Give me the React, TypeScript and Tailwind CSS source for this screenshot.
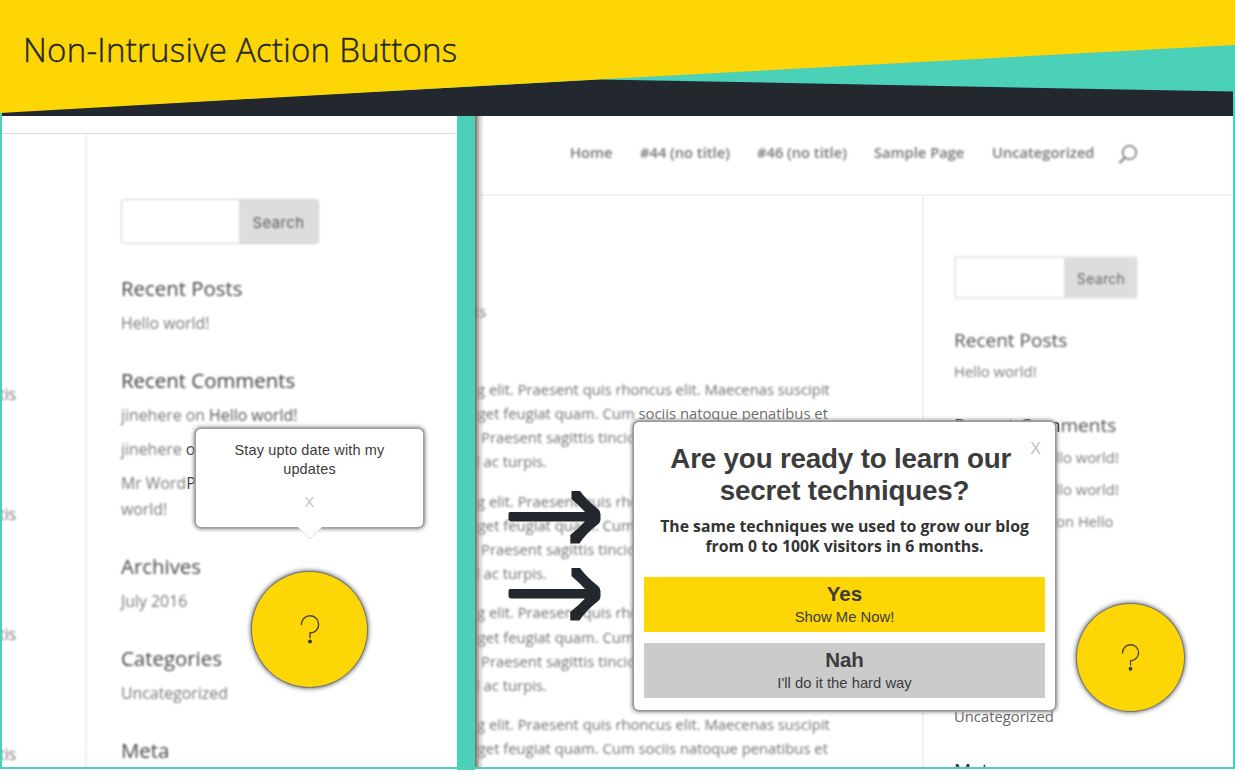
import React from "react";

const blur = "blur-[0.9px]";
const soft = "blur-[0.8px]";

function Banner() {
  return (
    <header className="relative h-[116px] w-full shrink-0">
      <svg className="absolute inset-0" width="1235" height="116" viewBox="0 0 1235 116">
        <rect width="1235" height="116" fill="#4bd1b8" />
        <path d="M2 112 L600 79.5 L1233 91.5 V116 H2 Z" fill="#23272e" />
        <path d="M0 0 H1235 V45 L605 79 L0 113 Z" fill="#fed605" />
      </svg>
      <h1 className="relative pl-[23px] pt-[27px] font-['Open_Sans','Noto_Sans',sans-serif] text-[33px] font-light leading-[46px] tracking-[0.27px] whitespace-nowrap text-[#23272e] [-webkit-text-stroke:0.4px_#23272e]">
        Non-Intrusive Action Buttons
      </h1>
    </header>
  );
}

function QuestionMark({ className }: { className: string }) {
  return (
    <svg className={className} viewBox="0 0 20 30" fill="none" stroke="#4a4a4a">
      <path d="M1.2 10.5 A8.9 8.9 0 1 1 10 18.6 V24" strokeWidth="1.5" />
      <circle cx="10" cy="27.5" r="2.1" fill="#3a3f4c" stroke="none" />
    </svg>
  );
}

function Arrow() {
  return (
    <svg width="93" height="54" viewBox="0 0 93 54" fill="#23272e">
      <path d="M1.500 22 H77 Q71 15.500 63.500 9 V1 H72 Q78 9.500 90 19 Q92.500 21 92.500 24 V30 Q92 33.500 89 35 Q78 43.500 71.500 53.500 H62.300 V45 Q71 38 77 31.500 H2.500 L0.500 30 V23.500 Z" />
    </svg>
  );
}

function LeftPanel() {
  return (
    <section className="flex h-[651px] w-[455px] shrink-0 flex-col overflow-hidden bg-white font-['Open_Sans',sans-serif]">
      <div className="h-[18px] shrink-0 border-b border-[#dedede]" />
      <div className="flex flex-1">
        <div className={`${soft} w-[85px] shrink-0 border-r-2 border-[#ececec] pt-[200px] text-[15.8px] leading-[120px] text-[#747474]`}>
          {[0, 1, 2, 3].map((i) => (
            <div key={i} className="-ml-[3px]">tis</div>
          ))}
        </div>
        <div className="pl-[34px] pt-[65px] whitespace-nowrap text-[15.85px] leading-[26px] text-[#7a7a7a]">
          <div className={`${soft} flex h-[45px] w-[198px] overflow-hidden rounded-[3px] border border-[#d0d0d0]`}>
            <div className="w-[117px]" />
            <div className="flex flex-1 items-center justify-center bg-[#dddddd] pt-[2px] font-['Inter',sans-serif] text-[15px] tracking-[0.4px] text-[#5c5c5c]">Search</div>
          </div>
          <h2 className={`${blur} mt-[29px] text-[20.4px] leading-[30px] text-[#464646]`}>Recent Posts</h2>
          <p className={`${blur} mt-[7px]`}>Hello world!</p>
          <h2 className="mt-[29px] text-[20.4px] leading-[30px] text-[#3c3c3c]">
            <span className={`${blur} inline-block`}>Recent&nbsp;</span>
            <span className={`${soft} inline-block`}>Comments</span>
          </h2>
          <p className="mt-[7px]">
            <span className={`${blur} inline-block`}>jinehere on&nbsp;</span>
            <span className={`${soft} inline-block text-[#555]`}>Hello world!</span>
          </p>
          <p className="mt-[8px]">
            <span className={`${blur} inline-block`}>jinehere&nbsp;</span>
            <span className="text-[#444]">on Hello world!</span>
          </p>
          <p className="mt-[8px]">
            <span className={`${blur} inline-block`}>Mr Word</span>
            <span className="text-[#444]">Press on Hello</span>
          </p>
          <p className={blur}>world!</p>
          <h2 className={`${blur} mt-[29px] text-[20.4px] leading-[30px] text-[#464646]`}>Archives</h2>
          <p className={`${blur} mt-[7px]`}>July 2016</p>
          <h2 className={`${blur} mt-[29px] text-[20.4px] leading-[30px] text-[#464646]`}>Categories</h2>
          <p className={`${blur} mt-[7px]`}>Uncategorized</p>
          <h2 className={`${blur} mt-[29px] text-[20.4px] leading-[30px] text-[#464646]`}>Meta</h2>
        </div>
      </div>
    </section>
  );
}

function Paragraph({ sharp }: { sharp?: boolean }) {
  return (
    <div className="mb-[15px]">
      <p className={soft}>g elit. Praesent quis rhoncus elit. Maecenas suscipit</p>
      <p>
        <span className={`${soft} -ml-[7.5px] inline-block`}>eget feugiat quam. Cum&nbsp;</span>
        <span className={sharp ? "text-[#6c6c6c]" : "inline-block blur-[0.8px]"}>sociis natoque penatibus et</span>
      </p>
      <p className={`${soft} pl-[4px]`}>Praesent sagittis tincidunt</p>
      <p className={`${soft} -ml-[1px]`}>l ac turpis.</p>
    </div>
  );
}

function RightPanel() {
  return (
    <section className="relative flex h-[651px] w-[758px] shrink-0 flex-col overflow-hidden bg-white font-['Open_Sans',sans-serif]">
      <nav className="flex h-[80px] shrink-0 items-start border-b-2 border-[#f1f1f1] pl-[95px] pt-[26px] text-[14.7px] font-semibold leading-[20px] whitespace-nowrap text-[#747474]">
        <span className={`${soft} w-[70px]`}>Home</span>
        <span className={`${soft} w-[117px]`}>#44 (no title)</span>
        <span className="w-[117px] blur-[1.02px]">#46 (no title)</span>
        <span className="w-[118px] blur-[1.2px]">Sample Page</span>
        <span className="w-[126px] blur-[1.02px]">Uncategorized</span>
        <svg className={`${soft} mt-[2px]`} width="20" height="20" viewBox="0 0 20 20" fill="none" stroke="#757575" strokeWidth="1.6">
          <circle cx="11.500" cy="8.500" r="6.800" />
          <path d="M7 13.500 L1.500 19" strokeWidth="2" />
        </svg>
      </nav>
      <div className="flex flex-1">
        <div className="w-[449px] shrink-0 border-r-2 border-[#f1f1f1] pl-[2px] whitespace-nowrap text-[14.8px] leading-[24.2px] text-[#727272]">
          <p className={`${soft} -ml-[3px] mt-[102.6px] mb-[54px]`}>ts</p>
          <Paragraph sharp />
          <Paragraph />
          <Paragraph />
          <Paragraph />
        </div>
        <div className="pl-[30px] pt-[60px] whitespace-nowrap text-[14.8px] leading-[24px] text-[#7a7a7a]">
          <div className={`${soft} flex h-[43px] w-[184px] overflow-hidden rounded-[3px] border-2 border-[#e8e8e8]`}>
            <div className="w-[110px]" />
            <div className="-m-[2px] flex flex-1 items-center justify-center bg-[#dddddd] pt-[2px] font-['Inter',sans-serif] text-[14px] tracking-[0.3px] text-[#666]">Search</div>
          </div>
          <h2 className={`${blur} mt-[27px] text-[19px] leading-[28px] text-[#505050]`}>Recent Posts</h2>
          <p className={`${blur} mt-[5px]`}>Hello world!</p>
          <h2 className="mt-[28px] text-[19px] leading-[28px] text-[#505050]">
            <span className="text-[#222]">Recent Com</span>
            <span className={`${blur} inline-block`}>ments</span>
          </h2>
          <p className={`${blur} mt-[6px]`}>jinehere on Hello world!</p>
          <p className={`${blur} mt-[8px]`}>jinehere on Hello world!</p>
          <p className={`${soft} mt-[8px]`}>Mr WordPress on Hello</p>
          <p>world!</p>
          <h2 className="mt-[28px] text-[19px] leading-[28px]">Archives</h2>
          <p className="mt-[5px]">July 2016</p>
          <h2 className="mt-[28px] text-[19px] leading-[28px]">Categories</h2>
          <p className="mt-[6px] text-[#666]">Uncategorized</p>
          <h2 className="mt-[28px] text-[19px] leading-[28px] text-[#333]">Meta</h2>
        </div>
      </div>
      <div className="absolute inset-y-0 left-0 w-[9px] bg-linear-to-r from-[#776a60] via-[#a79e9780] to-transparent" />
    </section>
  );
}

function Tooltip() {
  return (
    <div className="absolute left-[196px] top-[429px] h-[98px] w-[227px] rounded-[5px] bg-white pt-[12px] text-center font-['Liberation_Sans',Arial,sans-serif] text-[14.5px] leading-[19px] tracking-[0.15px] text-[#3c3c3c] shadow-[0_0_0_1.5px_#a0a0a0,0_0_4px_2px_#888]">
      <p>Stay upto date with my</p>
      <p>updates</p>
      <p className="mt-[14px] text-[#c4c4c4]">X</p>
      <svg className="absolute -bottom-[13px] left-[101px]" width="26" height="14" viewBox="0 0 26 14">
        <path d="M0 0 H26 L13 13 Z" fill="#fff" />
        <path d="M1 1 L13 13 L25 1" fill="none" stroke="#ddd" />
      </svg>
    </div>
  );
}

function Modal() {
  return (
    <div className="absolute left-[634px] top-[422px] flex h-[288px] w-[421px] flex-col rounded-[5px] bg-white px-[10px] pt-[21px] text-center font-['Liberation_Sans',Arial,sans-serif] text-[#3c3c3c] shadow-[0_0_0_1.5px_#999,0_0_4px_1.5px_#888]">
      <span className="absolute right-[14px] top-[17px] text-[16px] leading-[20px] text-[#c0c0c0]">X</span>
      <h2 className="text-[27.8px] font-bold leading-[32px] tracking-[-0.2px] whitespace-nowrap">
        Are you ready to learn our&nbsp;
        <br />
        secret techniques?
      </h2>
      <p className="mt-[9px] font-['Open_Sans',sans-serif] text-[15.8px] font-bold leading-[20px] whitespace-nowrap text-[#333]">
        The same techniques we used to grow our blog
        <br />
        from 0 to 100K visitors in 6 months.
      </p>
      <button className="mt-[21px] block h-[55px] shrink-0 bg-[#fdd606]">
        <b className="block pt-px text-[20.5px] leading-[24px]">Yes</b>
        <span className="block text-[14.8px] leading-[22px]">Show Me Now!</span>
      </button>
      <button className="mt-[11px] block h-[55px] shrink-0 bg-[#cbcbcb]">
        <b className="block pt-px text-[20.5px] leading-[24px]">Nah</b>
        <span className="block text-[14.8px] leading-[22px]">I'll do it the hard way</span>
      </button>
    </div>
  );
}

export default function App() {
  return (
    <main className="relative flex h-[780px] w-[1235px] flex-col overflow-hidden bg-white">
      <Banner />
      <div className="flex h-[654px]">
        <div className="flex h-[653px] border-b-2 border-l-2 border-[#4bd1b8]">
          <LeftPanel />
        </div>
        <div className="h-[654px] w-[18px] shrink-0 bg-[#4bd1b8]" />
        <div className="flex h-[653px] border-b-2 border-r-2 border-[#4bd1b8]">
          <RightPanel />
        </div>
      </div>
      <div className="absolute left-[508px] top-[490px]"><Arrow /></div>
      <div className="absolute left-[508px] top-[567px]"><Arrow /></div>
      <Tooltip />
      <Modal />
      <button className="absolute left-[252px] top-[572px] flex h-[115px] w-[115px] items-center justify-center rounded-full bg-[#fdd606] shadow-[0_0_0_1px_#777,0_0_5px_1px_#444]">
        <QuestionMark className="h-[29px] w-[20px]" />
      </button>
      <button className="absolute left-[1076.5px] top-[604px] flex h-[107px] w-[107px] items-center justify-center rounded-full bg-[#fdd606] shadow-[0_0_0_1px_#777,0_0_5px_1px_#444]">
        <QuestionMark className="h-[27px] w-[19px]" />
      </button>
    </main>
  );
}
